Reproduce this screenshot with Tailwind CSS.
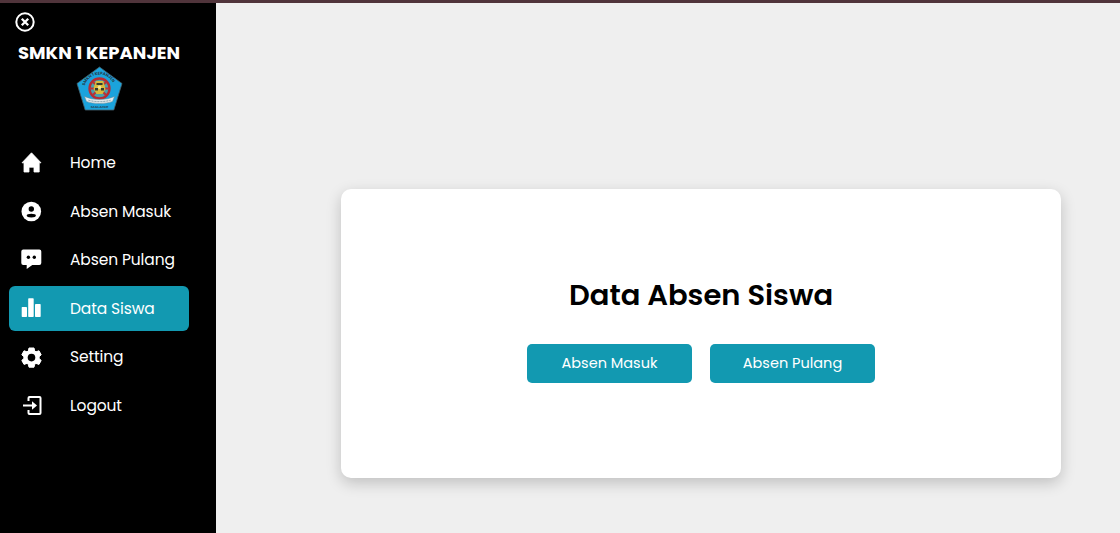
<!DOCTYPE html>
<html lang="id">
<head>
<meta charset="utf-8">
<title>Data Absen Siswa</title>
<script src="https://cdn.jsdelivr.net/npm/@tailwindcss/browser@4"></script>
</head>
<body class="h-[533px] overflow-hidden bg-[#efefef] font-[Poppins,Inter,sans-serif] flex flex-col">
<div class="h-[3px] shrink-0 bg-[#50343b]"></div>
<div class="flex flex-1 min-h-0">
  <aside class="w-[216px] shrink-0 bg-black text-white flex flex-col">
    <svg class="ml-[15px] mt-[9px] size-5 shrink-0" viewBox="0 0 20 20" fill="none" stroke="#fff"><circle cx="10" cy="10" r="8.7" stroke-width="2"/><path d="M6.8 6.8l6.4 6.4M13.2 6.8l-6.4 6.4" stroke-width="2.3"/></svg>
    <h1 class="ml-[18px] mt-[10px] h-[22px] text-[18px] leading-[22px] font-bold whitespace-nowrap">SMKN 1 KEPANJEN</h1>
    <svg class="ml-[76px] mt-[1px] w-[47px] h-[48px] shrink-0 overflow-visible" viewBox="0 0 47 48">
      <path d="M23.5 2L46 18.5L37.8 45H9.2L1 18.5Z" fill="#1ba3dc" stroke="#45616c" stroke-width=".8"/>
      <path id="arc" d="M8.5 22C12 5.5 35 5.5 38.5 22" fill="none"/>
      <text font-size="4" font-weight="700" fill="#243c4c"><textPath href="#arc" startOffset="3%">SMKN 1 KEPANJEN</textPath></text>
      <circle cx="23.5" cy="23.5" r="10" fill="#4aa0ad" stroke="#b72c32" stroke-width="2.3"/>
      <path d="M14 23.5h19M17 17l13 13M30 17L17 30" stroke="#b8343a" stroke-width="2.2"/>
      <path d="M20 16h7l1.500 4 1 4-3 5h-6l-3-5 1-4z" fill="#d9b93c"/>
      <path d="M20.500 18h6v2h-6zM19 23h3v2.500h-3zM25 23h3v2.500h-3z" fill="#333b30"/>
      <circle cx="23.500" cy="22.300" r="1.700" fill="#f0e498"/>
      <path d="M8.500 31.500q6 3 15 3t15-3l-2 5q-5 2-13 2t-13-2z" fill="#e3eaec" stroke="#6d8b97" stroke-width=".5"/>
      <path d="M12.500 35.300q11 2.700 22 0" fill="none" stroke="#7d97a3" stroke-width="1" stroke-dasharray="2 1"/>
      <text x="23.500" y="43" text-anchor="middle" font-size="4" font-weight="700" fill="#24516a">MALANG</text>
    </svg>
    <nav class="ml-[9px] mt-[27px] w-[180px] flex flex-col gap-[3.65px] text-[15.5px] tracking-[-0.12px]">
      <a class="h-[45px] shrink-0 flex items-center rounded-md pl-3 gap-[28px]"><svg class="size-[21px] shrink-0" viewBox="0 0 21 21" fill="#fff"><path d="M10.500.8L20 10.800h-1.800V20h-5.200v-4.800H8V20H3V10.800H1z" stroke="#fff" stroke-width=".8" stroke-linejoin="round"/></svg><span>Home</span></a>
      <a class="h-[45px] shrink-0 flex items-center rounded-md pl-3 gap-[28px]"><svg class="size-[21px] shrink-0" viewBox="0 0 21 21"><circle cx="10.300" cy="10.500" r="9.800" fill="#fff"/><circle cx="10.300" cy="8" r="2.700"/><ellipse cx="10.300" cy="14.600" rx="4.600" ry="1.900"/></svg><span>Absen Masuk</span></a>
      <a class="h-[45px] shrink-0 flex items-center rounded-md pl-3 gap-[28px]"><svg class="size-[21px] shrink-0" viewBox="0 0 21 21"><path d="M2.300.5h16q2 0 2 2v11.500q0 2-2 2h-7L5.700 20V16H2.300q-2 0-2-2V2.500q0-2 2-2z" fill="#fff"/><circle cx="7.400" cy="8.300" r="1.700"/><circle cx="13.300" cy="8.300" r="1.700"/></svg><span>Absen Pulang</span></a>
      <a class="h-[45px] shrink-0 flex items-center rounded-md pl-3 gap-[28px] bg-[#1299b1]"><svg class="size-[21px] shrink-0" viewBox="0 0 21 21" fill="#fff"><rect x=".7" y="9" width="5.300" height="10" rx=".7"/><rect x="7.200" y=".3" width="5.500" height="18.700" rx=".7"/><rect x="14" y="6" width="5.700" height="13" rx=".7"/></svg><span>Data Siswa</span></a>
      <a class="h-[45px] shrink-0 flex items-center rounded-md pl-3 gap-[28px]"><svg class="size-[21px] shrink-0" viewBox="0 0 21 21"><path d="M8 1h5l.7 3 1.300.8 3-1 2.200 4-2.100 2v1.600l2.100 2-2.200 4-3-1-1.300.8-.7 3H8l-.7-3-1.300-.8-3 1-2.200-4 2.100-2V9.800l-2.100-2 2.200-4 3 1L7.300 4z" fill="#fff" stroke="#fff" stroke-linejoin="round"/><circle cx="10.500" cy="10.600" r="3.800"/></svg><span>Setting</span></a>
      <a class="h-[45px] shrink-0 flex items-center rounded-md pl-3 gap-[28px]"><svg class="size-[21px] shrink-0" viewBox="0 0 21 21" fill="none" stroke="#fff" stroke-width="2"><path d="M7.500 6V3q0-1 1-1h10q1 0 1 1v15q0 1-1 1h-10q-1 0-1-1v-3M2 10.500h10"/><path d="M11 6.300l5 4.200-5 4.200z" fill="#fff" stroke="none"/></svg><span>Logout</span></a>
    </nav>
  </aside>
  <main class="flex-1 pl-[125px] pt-[186px]">
    <section class="w-[720px] h-[289px] rounded-[10px] bg-white shadow-[0_5px_15px_rgba(0,0,0,0.2)] flex flex-col items-center">
      <h2 class="mt-[84px] h-[44px] text-[29px] leading-[44px] font-semibold text-black whitespace-nowrap">Data Absen Siswa</h2>
      <div class="mt-[27px] flex gap-[18px] text-[14.5px] text-white">
        <button class="w-[165px] h-[39px] rounded-[5px] bg-[#1299b1]">Absen Masuk</button>
        <button class="w-[165px] h-[39px] rounded-[5px] bg-[#1299b1]">Absen Pulang</button>
      </div>
    </section>
  </main>
</div>
</body>
</html>
